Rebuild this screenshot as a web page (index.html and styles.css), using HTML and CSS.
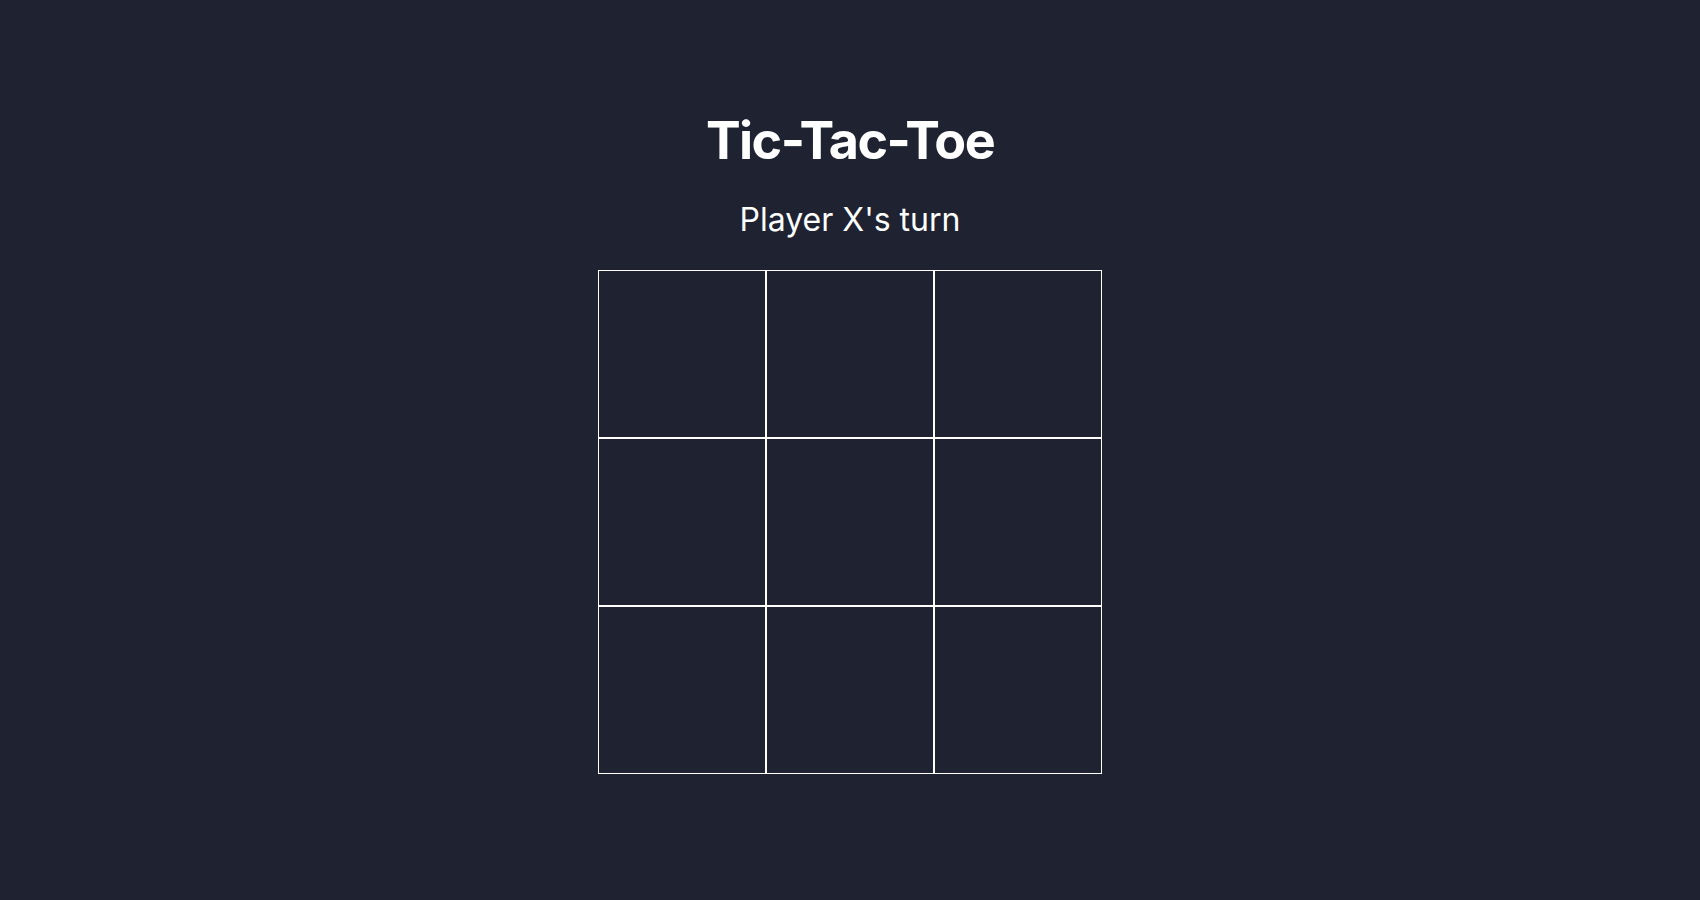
FILE: index.html
```html
<!DOCTYPE html>
<html lang="en">
  <head>
    <meta charset="UTF-8" />
    <meta name="viewport" content="width=device-width, initial-scale=1.0" />
    <title>Tic-Tac-Toe</title>
    <link rel="stylesheet" href="styles.css">
  </head>
  <body>
    <div class="game">
      <h1>Tic-Tac-Toe</h1>
      <div class="status">Player X's turn</div>
      <div class="board">
        <button class="cell"></button>
        <button class="cell"></button>
        <button class="cell"></button>
        <button class="cell"></button>
        <button class="cell"></button>
        <button class="cell"></button>
        <button class="cell"></button>
        <button class="cell"></button>
        <button class="cell"></button>
      </div>
    </div>
  </body>
</html>
```

FILE: styles.css
```css
body {
  margin: 0;
  min-height: 100vh;
  background-color: #1e2231;
  color: white;
  font-family: Inter, "Noto Sans", sans-serif;
}
.game {
  display: flex;
  flex-direction: column;
  align-items: center;
  padding-top: 110px;
}
h1 {
  font-size: 52px;
  line-height: 62px;
  font-weight: 700;
  letter-spacing: -0.03em;
  margin: 0 0 28px;
}
.status {
  font-size: 32px;
  line-height: 39px;
  margin-bottom: 31px;
}
.board {
  display: grid;
  grid-template-columns: repeat(3, 168px);
  grid-template-rows: repeat(3, 168px);
}
.cell {
  box-sizing: border-box;
  background: transparent;
  border: 1px solid white;
  padding: 0;
  cursor: pointer;
}
```
